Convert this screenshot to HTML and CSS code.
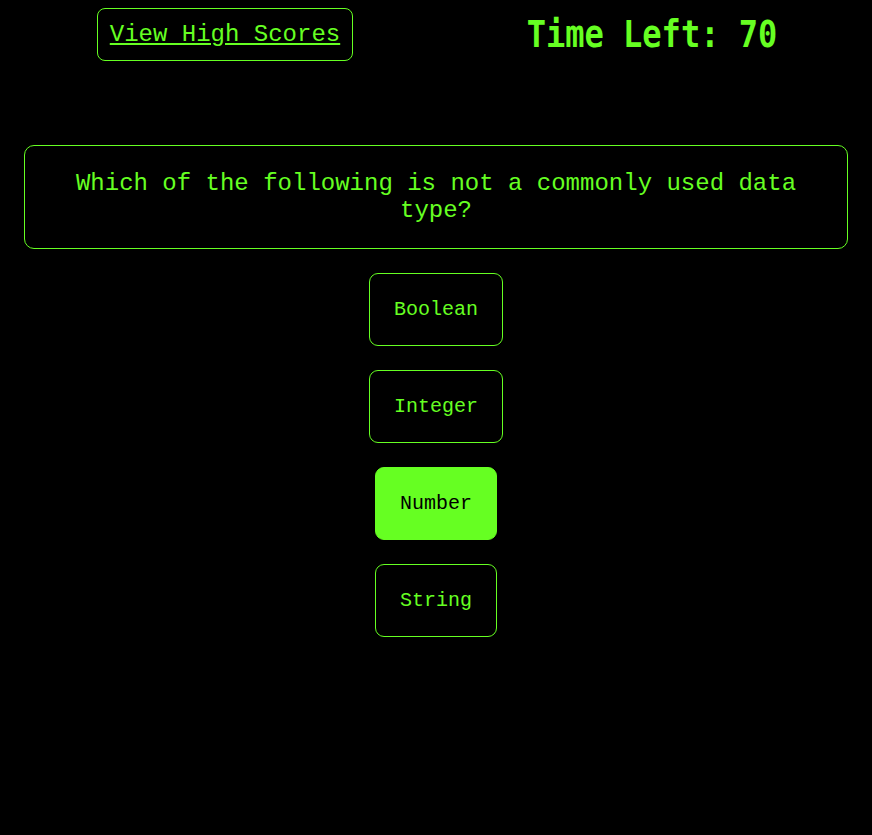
FILE: index.html
```html
<!DOCTYPE html>
<html>
<head>
<meta charset="utf-8">
<link rel="stylesheet" href="styles.css">
</head>
<body>
<header class="top">
  <a class="scores" href="#">View High Scores</a>
  <div class="timer">Time Left: 70</div>
</header>
<main class="quiz">
  <div class="question">Which of the following is not a commonly used data type?</div>
  <div class="options">
    <button class="opt">Boolean</button>
    <button class="opt">Integer</button>
    <button class="opt opt-active">Number</button>
    <button class="opt">String</button>
  </div>
</main>
</body>
</html>
```
FILE: styles.css
```css
html, body {
  background: #000;
}
body {
  margin: 8px;
  color: #66ff22;
  font-family: "Liberation Mono", monospace;
}
.top {
  display: flex;
  justify-content: space-around;
  align-items: flex-start;
}
.scores {
  display: block;
  color: #66ff22;
  font-size: 24px;
  line-height: 27px;
  padding: 12px 12px;
  border: 1px solid #66ff22;
  border-radius: 8px;
  text-decoration: underline;
  margin-left: 2px;
}
.timer {
  font-family: "DejaVu Sans Mono", monospace;
  font-weight: bold;
  font-size: 32px;
  line-height: 53px;
  transform: scaleY(1.15);
}
.quiz {
  margin: 84px 16px 0;
}
.question {
  border: 1px solid #66ff22;
  border-radius: 10px;
  padding: 24px 24px;
  text-align: center;
  font-size: 24px;
  line-height: 27px;
}
.options {
  display: flex;
  flex-direction: column;
  align-items: center;
  gap: 24px;
  margin-top: 24px;
}
.opt {
  font-family: "Liberation Mono", monospace;
  font-size: 20px;
  line-height: 23px;
  padding: 24px;
  background: #000;
  color: #66ff22;
  border: 1px solid #66ff22;
  border-radius: 9px;
}
.opt-active {
  background: #66ff22;
  color: #000;
}
```
